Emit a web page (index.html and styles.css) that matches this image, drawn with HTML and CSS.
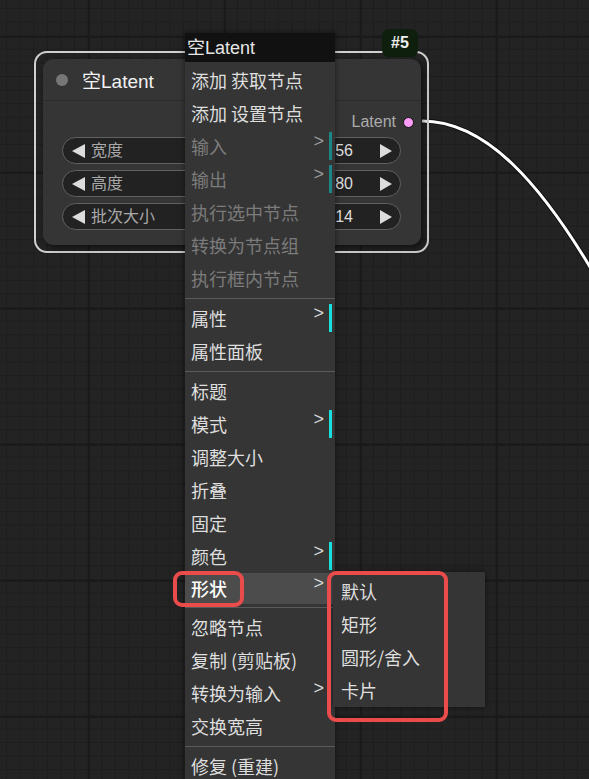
FILE: index.html
```html
<!DOCTYPE html>
<html lang="zh">
<head>
<meta charset="utf-8">
<title>ComfyUI 上下文菜单</title>
<link rel="stylesheet" href="styles.css">
</head>
<body>
<div class="canvas">
  <svg class="links" width="589" height="779" viewBox="0 0 589 779">
    <path d="M422,121 C480,121 540,170 620,320" class="link-shadow"/>
    <path d="M422,121 C480,121 540,170 620,320" class="link"/>
  </svg>

  <div class="node-outline"></div>
  <div class="node-badge">#5</div>
  <div class="node">
    <div class="node-title">
      <span class="node-dot"></span>
      <span class="node-name">空Latent</span>
    </div>
    <div class="node-body">
      <div class="node-output">
        <span class="out-label">Latent</span>
        <span class="out-slot"></span>
      </div>
      <div class="widgets">
        <div class="widget"><span class="arrow-left"></span><span class="w-label">宽度</span><span class="w-value">56</span><span class="arrow-right"></span></div>
        <div class="widget"><span class="arrow-left"></span><span class="w-label">高度</span><span class="w-value">80</span><span class="arrow-right"></span></div>
        <div class="widget"><span class="arrow-left"></span><span class="w-label">批次大小</span><span class="w-value">14</span><span class="arrow-right"></span></div>
      </div>
    </div>
  </div>

  <div class="menu">
    <div class="menu-title">空Latent</div>
    <div class="menu-body">
      <div class="item"><span>添加 获取节点</span></div>
      <div class="item"><span>添加 设置节点</span></div>
      <div class="item disabled dim"><span>输入</span><span class="chev">&gt;</span><span class="bar"></span></div>
      <div class="item disabled dim"><span>输出</span><span class="chev">&gt;</span><span class="bar"></span></div>
      <div class="item disabled"><span>执行选中节点</span></div>
      <div class="item disabled"><span>转换为节点组</span></div>
      <div class="item disabled"><span>执行框内节点</span></div>
      <div class="sep"></div>
      <div class="item"><span>属性</span><span class="chev">&gt;</span><span class="bar"></span></div>
      <div class="item"><span>属性面板</span></div>
      <div class="sep"></div>
      <div class="item"><span>标题</span></div>
      <div class="item"><span>模式</span><span class="chev">&gt;</span><span class="bar"></span></div>
      <div class="item"><span>调整大小</span></div>
      <div class="item"><span>折叠</span></div>
      <div class="item"><span>固定</span></div>
      <div class="item"><span>颜色</span><span class="chev">&gt;</span><span class="bar"></span></div>
      <div class="item active"><span>形状</span><span class="chev">&gt;</span></div>
      <div class="sep"></div>
      <div class="item"><span>忽略节点</span></div>
      <div class="item"><span>复制 (剪贴板)</span></div>
      <div class="item"><span>转换为输入</span><span class="chev">&gt;</span></div>
      <div class="item"><span>交换宽高</span></div>
      <div class="sep"></div>
      <div class="item"><span>修复 (重建)</span></div>
    </div>
  </div>

  <div class="submenu">
    <div class="sub-item">默认</div>
    <div class="sub-item">矩形</div>
    <div class="sub-item">圆形/舍入</div>
    <div class="sub-item">卡片</div>
  </div>

  <div class="mark mark-item"></div>
  <div class="mark mark-sub"></div>
</div>
</body>
</html>
```

FILE: styles.css
```css
html, body {
  margin: 0;
  padding: 0;
  background: #222222;
}

body {
  font-family: "Liberation Sans", "Noto Sans CJK SC", sans-serif;
}

.canvas {
  position: relative;
  width: 589px;
  height: 779px;
  overflow: hidden;
  background-color: #232323;
  background-image:
    linear-gradient(90deg, #1a1a1a 2px, transparent 2px),
    linear-gradient(#1a1a1a 2px, transparent 2px),
    linear-gradient(90deg, #1d1d1d 1px, transparent 1px),
    linear-gradient(#1d1d1d 1px, transparent 1px);
  background-size: 136px 136px, 136px 136px, 13.6px 13.6px, 13.6px 13.6px;
  background-position: 88px 36px, 88px 36px, 6px 8px, 6px 8px;
}

/* links */
.links {
  position: absolute;
  left: 0;
  top: 0;
}
.link-shadow {
  fill: none;
  stroke: #111;
  stroke-width: 5;
}
.link {
  fill: none;
  stroke: #ffffff;
  stroke-width: 3;
}

/* node */
.node-outline {
  position: absolute;
  left: 34px;
  top: 51px;
  width: 391px;
  height: 198px;
  border: 2px solid #d0d0d0;
  border-radius: 13px;
}

.node-badge {
  position: absolute;
  left: 382px;
  top: 29px;
  width: 36px;
  height: 28px;
  background: #0e1f0e;
  border-radius: 7px;
  color: #f0f0f0;
  font-size: 16px;
  font-weight: bold;
  display: flex;
  align-items: center;
  justify-content: center;
}

.node {
  position: absolute;
  left: 43px;
  top: 59px;
  width: 378px;
  height: 186px;
  background: #353535;
  border-radius: 10px;
  box-shadow: 3px 3px 6px rgba(0, 0, 0, 0.5);
  display: flex;
  flex-direction: column;
}

.node-title {
  height: 42px;
  box-sizing: border-box;
  border-bottom: 1px solid #2c2c2c;
  display: flex;
  align-items: center;
  padding-left: 13px;
  gap: 14px;
}

.node-dot {
  width: 12px;
  height: 12px;
  border-radius: 50%;
  background: #777;
}

.node-name {
  color: #f2f2f2;
  font-size: 19px;
}

.node-body {
  display: flex;
  flex-direction: column;
  padding: 9px 0 0 19px;
}

.node-output {
  display: flex;
  align-items: center;
  justify-content: flex-end;
  gap: 7px;
  padding-right: 7px;
  height: 22px;
  margin-top: 1px;
}

.out-label {
  color: #ababab;
  font-size: 16px;
}

.out-slot {
  width: 9px;
  height: 9px;
  border-radius: 50%;
  background: #ff9cf9;
  border: 1px solid #111;
}

.widgets {
  display: flex;
  flex-direction: column;
  gap: 6px;
  margin-top: 4px;
}

.widget {
  width: 339px;
  height: 27px;
  box-sizing: border-box;
  background: #222;
  border: 1px solid #616161;
  border-radius: 14px;
  display: flex;
  align-items: center;
  padding: 0 6px 0 9px;
  color: #a8a8a8;
  font-size: 16px;
  line-height: 1;
}

.arrow-left {
  width: 0;
  height: 0;
  border-top: 7px solid transparent;
  border-bottom: 7px solid transparent;
  border-right: 13px solid #dcdcdc;
  margin-right: 6px;
}

.arrow-right {
  width: 0;
  height: 0;
  border-top: 7px solid transparent;
  border-bottom: 7px solid transparent;
  border-left: 12px solid #dcdcdc;
  margin-left: 27px;
  margin-right: 2px;
}

.w-label {
  flex: 1;
}

.w-value {
  color: #dcdcdc;
}

/* context menu */
.menu {
  position: absolute;
  left: 185px;
  top: 33px;
  width: 150px;
  font-family: "Noto Sans CJK SC", "Liberation Sans", sans-serif;
  box-shadow: 0 0 6px rgba(0, 0, 0, 0.5);
}

.menu-title {
  height: 29px;
  background: #111;
  color: #e6e6e6;
  font-family: "Liberation Sans", "Noto Sans CJK SC", sans-serif;
  font-size: 18px;
  line-height: 31px;
  padding-left: 2px;
}

.menu-body {
  background: #353535;
  padding-top: 2px;
}

.item {
  position: relative;
  height: 33px;
  line-height: 33px;
  padding-left: 6px;
  font-size: 18px;
  color: #dedede;
  white-space: nowrap;
}

.item.disabled {
  color: #7b7b7b;
}

.item.active {
  background: #4c4c4c;
  color: #ffffff;
  font-weight: 500;
  height: 31px;
  line-height: 31px;
  margin-bottom: 2px;
}

.chev {
  position: absolute;
  right: 11px;
  top: -5px;
  font-family: "Liberation Sans", sans-serif;
  font-size: 18px;
  font-weight: normal;
  color: #d8d8d8;
}

.item.disabled .chev {
  color: #9a9a9a;
}

.bar {
  position: absolute;
  right: 3px;
  top: 2px;
  width: 3px;
  height: 28px;
  background: #19dede;
}

.item.dim .bar {
  background: #1c8585;
}

.sep {
  height: 1px;
  background: #5a5a5a;
  margin: 3px 0;
}

/* submenu */
.submenu {
  position: absolute;
  left: 333px;
  top: 572px;
  width: 152px;
  height: 135px;
  box-sizing: border-box;
  padding-top: 3px;
  background: #353535;
  box-shadow: 0 0 6px rgba(0, 0, 0, 0.5);
  font-family: "Noto Sans CJK SC", "Liberation Sans", sans-serif;
}

.sub-item {
  height: 33px;
  line-height: 33px;
  padding-left: 8px;
  font-size: 18px;
  color: #dedede;
}

/* annotations */
.mark {
  position: absolute;
  border: 4px solid #ea4b4b;
  border-radius: 9px;
  box-sizing: border-box;
}

.mark-item {
  left: 173px;
  top: 571px;
  width: 71px;
  height: 36px;
}

.mark-sub {
  left: 327px;
  top: 571px;
  width: 121px;
  height: 151px;
}
```
